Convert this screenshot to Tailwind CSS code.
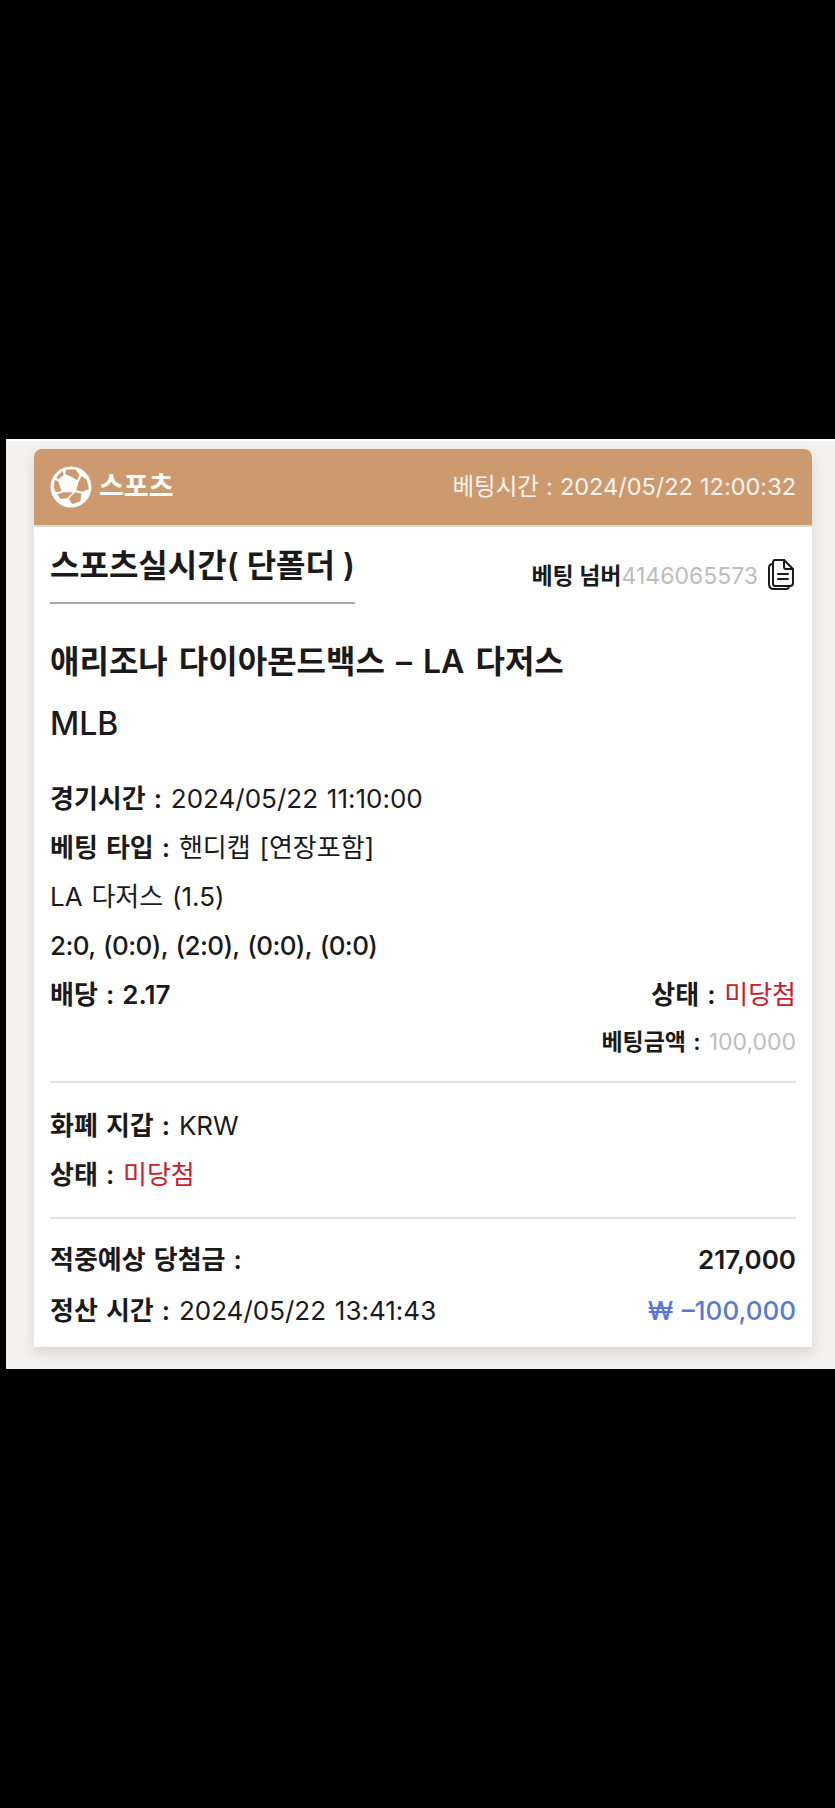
<!DOCTYPE html>
<html lang="ko">
<head>
    <meta charset="UTF-8">
    <meta name="viewport" content="width=device-width, initial-scale=1.0">
    <title>베팅 내역</title>
    <script src="https://cdn.jsdelivr.net/npm/@tailwindcss/browser@4"></script>
</head>
<body class="bg-black h-[1808px] overflow-hidden font-['Inter','Noto_Sans_CJK_KR',sans-serif] text-[#1a1a1a]">
    <div class="pt-[439px]">
        <div class="ml-[6px] h-[930px] bg-[#f3f2f0] border-t-2 border-white pt-2 pl-[28px] pr-[23px]">
            <!-- 카드 -->
            <div class="bg-white rounded-t-[8px] shadow-[0_6px_14px_rgba(0,0,0,0.12)] h-[898px]">
                <div class="h-[78px] bg-[#cd996f] border-b-2 border-[#e3d6cc] rounded-t-[8px] flex items-center justify-between pl-4 pr-4 text-white">
                    <div class="flex items-center gap-[7px]">
                        <svg class="w-[42px] h-[42px]" viewBox="0 0 40 40">
                            <circle cx="20" cy="20" r="19.500" fill="white"/>
                            <g fill="#cd996f">
                                <polygon points="15,3.500 24,3 28,8 26,13.500 19,9.500 14.500,7.500"/>
                                <polygon points="27,15.500 30,9.500 35,13 37,22 31,24.500 25,23"/>
                                <polygon points="24,25 30,26.500 29,33.500 21,36.500 18,31"/>
                                <polygon points="13,25 22,25 16.500,30.500 10,31.500 7,27"/>
                                <polygon points="8,15 11,24 5.500,25 3.500,20 4.500,13"/>
                                <polygon points="12,4.500 13,8.500 8,12.500 6,11"/>
                            </g>
                        </svg>
                        <span class="text-[27px] font-bold">스포츠</span>
                    </div>
                    <span class="text-[23.500px] text-white/90 [word-spacing:0.500px]">베팅시간 : 2024/05/22 12:00:32</span>
                </div>

                <div class="px-4">
                    <div class="flex items-start justify-between pt-[18px]">
                        <div class="text-[32px] leading-[42px] font-semibold w-[305px] h-[59px] border-b-2 border-[#a8a8a8]">스포츠실시간( 단폴더 )</div>
                        <div class="flex items-center mt-[14px] text-[23px]">
                            <span class="font-bold">베팅 넘버</span>
                            <span class="text-[#bdbdbd]">4146065573</span>
                            <svg class="w-[30px] h-[32px] ml-2 -mt-1" viewBox="0 0 30 32" fill="none" stroke="#1a1a1a" stroke-width="2" stroke-linejoin="round" stroke-linecap="round">
                                <path d="M9 2 H18 L27 11 V25 Q27 28 24 28 H9 Q7 28 7 25 V5 Q7 2 9 2Z"/>
                                <path d="M18 2 V9 Q18 11 20 11 H27"/>
                                <path d="M7 6 Q3 6 3 10 V26 Q3 31 8 31 H20 Q23 31 23 28"/>
                                <path d="M12 16 H22 M12 21 H22"/>
                            </svg>
                        </div>
                    </div>

                    <div class="text-[32px] leading-[62px] font-semibold mt-[27px] [word-spacing:3px]">애리조나 다이아몬드백스 – LA 다저스</div>
                    <div class="text-[32px] leading-[62px] font-medium">MLB</div>

                    <div class="mt-[19px] text-[26px] leading-[49px] [word-spacing:1.500px]">
                        <div><span class="font-semibold">경기시간 :</span> 2024/05/22 11:10:00</div>
                        <div><span class="font-semibold">베팅 타입 :</span> 핸디캡 [연장포함]</div>
                        <div>LA 다저스 (1.5)</div>
                        <div class="font-medium tracking-[-0.6px]">2:0, (0:0), (2:0), (0:0), (0:0)</div>
                        <div class="flex justify-between">
                            <div class="font-semibold">배당 : 2.17</div>
                            <div><span class="font-semibold">상태 :</span> <span class="text-[#c8202f]">미당첨</span></div>
                        </div>
                    </div>
                    <div class="text-right text-[23px] leading-[46px] pb-[16px] border-b-2 border-[#e2e2e2] [word-spacing:1.500px]">
                        <span class="font-semibold">베팅금액 :</span> <span class="text-[#bdbdbd]">100,000</span>
                    </div>

                    <div class="py-[18px] text-[26px] leading-[49px] border-b-2 border-[#e2e2e2] [word-spacing:1.500px]">
                        <div><span class="font-semibold">화폐 지갑 :</span> KRW</div>
                        <div><span class="font-semibold">상태 :</span> <span class="text-[#c8202f]">미당첨</span></div>
                    </div>

                    <div class="pt-[15px] text-[26px] leading-[51px] [word-spacing:1.500px]">
                        <div class="flex justify-between">
                            <span class="font-semibold">적중예상 당첨금 :</span>
                            <span class="font-semibold">217,000</span>
                        </div>
                        <div class="flex justify-between">
                            <div><span class="font-semibold">정산 시간 :</span> 2024/05/22 13:41:43</div>
                            <span class="font-medium text-[#5a79d6]">₩ –100,000</span>
                        </div>
                    </div>
                </div>
            </div>
        </div>
    </div>
</body>
</html>
